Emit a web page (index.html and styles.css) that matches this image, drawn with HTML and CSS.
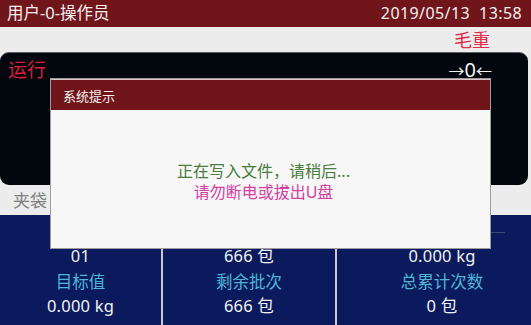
FILE: index.html
```html
<!DOCTYPE html>
<html lang="zh">
<head>
<meta charset="utf-8">
<link rel="stylesheet" href="styles.css">
</head>
<body>
<div class="screen">
  <header class="topbar">
    <span class="user">用户-0-操作员</span>
    <span class="clock">2019/05/13&nbsp;&nbsp;13:58</span>
  </header>
  <div class="mode-row"><span class="mode">毛重</span></div>
  <div class="panel">
    <span class="status">运行</span>
    <span class="zero"><span class="arr">→</span>0<span class="arr">←</span></span>
  </div>
  <div class="strip"><span class="strip-label">夹袋</span></div>
  <div class="stats">
    <div class="col">
      <div class="cap"></div>
      <div class="val v1">01</div>
      <div class="lab">目标值</div>
      <div class="val v3">0.000 kg</div>
    </div>
    <div class="col sep">
      <div class="cap"></div>
      <div class="val v1">666 包</div>
      <div class="lab">剩余批次</div>
      <div class="val v3">666 包</div>
    </div>
    <div class="col sep last">
      <div class="cap line"></div>
      <div class="val v1">0.000 kg</div>
      <div class="lab">总累计次数</div>
      <div class="val v3">0 包</div>
    </div>
  </div>

  <div class="dialog">
    <div class="dialog-title">系统提示</div>
    <div class="dialog-body">
      <div class="msg-main">正在写入文件，请稍后...</div>
      <div class="msg-warn">请勿断电或拔出U盘</div>
    </div>
  </div>
</div>
</body>
</html>
```

FILE: styles.css
```css
* { box-sizing: border-box; }
html, body { margin: 0; padding: 0; }
body {
  width: 531px;
  height: 325px;
  overflow: hidden;
  font-family: "Noto Sans", "Noto Sans CJK SC", sans-serif;
  background: #ececec;
}
.screen {
  position: relative;
  width: 531px;
  height: 325px;
  display: flex;
  flex-direction: column;
}
.topbar {
  height: 27px;
  background: #70161b;
  color: #f4eeee;
  display: flex;
  justify-content: space-between;
  align-items: center;
  padding: 0 9px 1px 7px;
  line-height: 1;
}
.user { font-size: 16.5px; }
.clock { font-size: 16px; letter-spacing: 0.4px; }
.mode-row {
  height: 25px;
  display: flex;
  justify-content: flex-end;
  align-items: center;
  padding-right: 41px;
}
.mode {
  color: #e02a4a;
  font-size: 18px;
  line-height: 1;
  padding-top: 1px;
}
.panel {
  height: 133px;
  margin-right: 3px;
  background: #02060d;
  border-top: 1px solid #5a5d62;
  border-radius: 9px;
  display: flex;
  justify-content: space-between;
  align-items: flex-start;
  padding: 6px 36px 0 8px;
}
.status {
  color: #d81d3e;
  font-size: 19px;
  line-height: 22px;
}
.zero {
  color: #f2f2f2;
  font-size: 20px;
  line-height: 22px;
}
.arr { font-size: 16px; }
.strip {
  height: 30px;
  display: flex;
  align-items: center;
  padding-left: 13px;
}
.strip-label {
  color: #808080;
  font-size: 17px;
  line-height: 1;
}
.stats {
  flex: 1;
  background: #0a1a5c;
  display: grid;
  grid-template-columns: 161px 174px 1fr;
  padding-top: 10px;
  color: #f2f2f2;
  text-align: center;
}
.col {
  display: flex;
  flex-direction: column;
}
.sep { border-left: 2px solid #c9c9c9; }
.last { padding-left: 16px; }
.cap { height: 19px; }
.cap.line {
  height: 8px;
  margin: 0 26px 11px 0;
  border-bottom: 1px solid #3c4a7c;
}
.val { font-size: 16.5px; letter-spacing: 0.2px; }
.v1 { line-height: 24px; }
.lab {
  color: #4fb6d8;
  font-size: 16.5px;
  line-height: 28px;
}
.v3 { line-height: 20px; }

.dialog {
  position: absolute;
  left: 50px;
  top: 78px;
  width: 441px;
  height: 171px;
  border: 1px solid #9c9c9c;
  background: #f7f7f7;
  display: flex;
  flex-direction: column;
}
.dialog-title {
  height: 31px;
  background: #70161b;
  border-top: 1px solid #d8c4c4;
  color: #f4eeee;
  font-size: 13px;
  display: flex;
  align-items: center;
  padding-left: 12px;
}
.dialog-body {
  flex: 1;
  display: flex;
  flex-direction: column;
  align-items: center;
  justify-content: center;
  padding: 6px 14px 0 0;
  font-size: 16px;
  line-height: 21px;
}
.msg-main { color: #4a7c3e; }
.msg-warn { color: #d23ea2; }
```
